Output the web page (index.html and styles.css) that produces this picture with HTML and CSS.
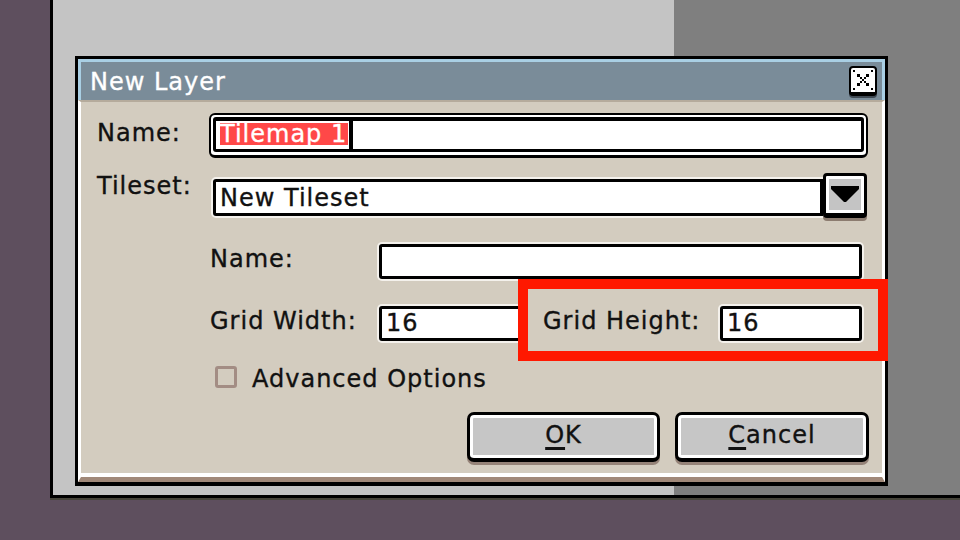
FILE: index.html
```html
<!DOCTYPE html>
<html>
<head>
<meta charset="utf-8">
<title>New Layer</title>
<link rel="stylesheet" href="styles.css">
</head>
<body>
<div class="screen">
  <div class="dialog">
    <div class="titlebar">
      <span class="title">New Layer</span>
      <div class="close">
        <svg width="20" height="20" viewBox="0 0 9 9" shape-rendering="crispEdges">
          <g fill="#000">
            <rect x="0" y="0" width="1" height="1"/><rect x="8" y="0" width="1" height="1"/>
            <rect x="0" y="8" width="1" height="1"/><rect x="8" y="8" width="1" height="1"/>
            <rect x="2" y="2" width="1" height="1"/><rect x="3" y="3" width="1" height="1"/>
            <rect x="4" y="4" width="1" height="1"/><rect x="5" y="5" width="1" height="1"/>
            <rect x="6" y="6" width="1" height="1"/><rect x="6" y="2" width="1" height="1"/>
            <rect x="5" y="3" width="1" height="1"/><rect x="3" y="5" width="1" height="1"/>
            <rect x="2" y="6" width="1" height="1"/>
          </g>
        </svg>
      </div>
    </div>
    <div class="body">
      <div class="row row-name">
        <span class="lbl lbl-name">Name:</span>
        <div class="focus-ring">
          <div class="input-focus"><span class="sel">Tilemap 1</span><span class="caret"></span></div>
        </div>
      </div>
      <div class="row row-tileset">
        <span class="lbl lbl-tileset">Tileset:</span>
        <div class="combo">
          <div class="combo-field">New Tileset</div>
          <div class="combo-btn">
            <svg width="28" height="16" viewBox="0 0 28 16"><polygon points="0,0 28,0 28,3 15,16 13,16 0,3" fill="#000"/></svg>
          </div>
        </div>
      </div>
      <div class="row row-sub">
        <span class="lbl lbl-sub">Name:</span>
        <div class="input input-wide"></div>
      </div>
      <div class="row row-sub row-grid">
        <span class="lbl lbl-sub">Grid Width:</span>
        <div class="input input-num">16</div>
        <span class="lbl lbl-height">Grid Height:</span>
        <div class="input input-num">16</div>
        <div class="highlight"></div>
      </div>
      <div class="row row-check">
        <span class="checkbox"></span>
        <span class="lbl lbl-check">Advanced Options</span>
      </div>
      <div class="row row-buttons">
        <div class="btn btn-ok"><span><u>O</u>K</span></div>
        <div class="btn btn-cancel"><span><u>C</u>ancel</span></div>
      </div>
    </div>
  </div>
</div>
</body>
</html>
```
FILE: styles.css
```css
html, body {
  margin: 0;
  padding: 0;
}
body {
  width: 960px;
  height: 540px;
  overflow: hidden;
  background: #5e4f5e;
  font-family: "DejaVu Sans", sans-serif;
  font-size: 24px;
  line-height: 28px;
  letter-spacing: 1px;
  color: #111;
  -webkit-text-stroke: 0.35px currentColor;
}
.screen {
  box-sizing: border-box;
  margin-left: 50px;
  width: 910px;
  height: 498px;
  border-left: 3px solid #000;
  border-bottom: 3px solid #000;
  background: linear-gradient(to right, #c4c4c4 621px, #7f7f7f 621px);
  box-shadow: 0 2px 0 #46443a;
  padding-top: 56px;
  padding-left: 22px;
}
.dialog {
  box-sizing: border-box;
  width: 813px;
  height: 430px;
  border: 3px solid #000;
  border-bottom-width: 4px;
  background: #d3ccbf;
}
.titlebar {
  box-sizing: border-box;
  height: 41px;
  background: #7a8c99;
  border-top: 3px solid #a9cfe4;
  border-left: 3px solid #a9cfe4;
  border-right: 3px solid #a9cfe4;
  display: flex;
  align-items: center;
  justify-content: space-between;
  padding-left: 9px;
  padding-right: 5px;
}
.title {
  color: #fff;
  padding-top: 2px;
}
.close {
  box-sizing: border-box;
  width: 28px;
  height: 30px;
  border: 2px solid #000;
  border-bottom-width: 4px;
  border-radius: 4px;
  background: #fff;
  box-shadow: 0 2px 0 #3e4852;
  display: flex;
  align-items: center;
  justify-content: center;
}
.body {
  box-sizing: border-box;
  height: 382px;
  border-top: 2px solid #b5ab9c;
  border-left: 3px solid #fff;
  border-right: 3px solid #fff;
  border-bottom: 5px solid #a08878;
  box-shadow: inset 0 -4px 0 #fff;
  padding-top: 11px;
}
.row {
  display: flex;
  align-items: flex-start;
}
.lbl {
  white-space: nowrap;
  flex: none;
}
.row-name {
  padding-left: 16px;
}
.lbl-name {
  width: 112px;
  margin-top: 6px;
}
.focus-ring {
  box-sizing: border-box;
  width: 659px;
  height: 45px;
  border: 2px solid #000;
  border-bottom-width: 3px;
  border-radius: 6px;
  padding: 2px 2px 3px;
  background: #fff;
}
.input-focus {
  box-sizing: border-box;
  height: 35px;
  border: 3px solid #000;
  border-top-width: 4px;
  border-radius: 3px;
  background: #fff;
  display: flex;
  align-items: center;
  padding-left: 4px;
}
.sel {
  background: #ff4848;
  color: #fff;
  line-height: 22px;
  height: 22px;
  padding-right: 1px;
  margin-top: -2px;
}
.caret {
  width: 4px;
  height: 28px;
  background: #000;
  margin-left: 1px;
}
.row-tileset {
  padding-left: 16px;
  margin-top: 15px;
}
.lbl-tileset {
  width: 116px;
  margin-top: -1px;
}
.combo {
  display: flex;
  align-items: flex-start;
}
.combo-field {
  box-sizing: border-box;
  width: 610px;
  height: 37px;
  margin-top: 6px;
  border: 3px solid #000;
  border-radius: 3px 0 0 3px;
  background: #fff;
  box-shadow: 0 0 0 2px #f4f1ec;
  padding-left: 4px;
  line-height: 32px;
}
.combo-btn {
  box-sizing: border-box;
  width: 44px;
  height: 45px;
  border: 3px solid #000;
  border-bottom-width: 5px;
  border-radius: 4px;
  background: #c4c4c4;
  box-shadow: inset 0 0 0 3px #fff, 0 3px 0 #8c7c70;
  display: flex;
  align-items: center;
  justify-content: center;
  padding-bottom: 2px;
  position: relative;
  z-index: 1;
}
.row-sub {
  padding-left: 129px;
  margin-top: 26px;
}
.lbl-sub {
  width: 169px;
  margin-top: 1px;
}
.input {
  box-sizing: border-box;
  height: 35px;
  border: 3px solid #000;
  border-radius: 3px;
  background: #fff;
  box-shadow: 0 0 0 2px #f4f1ec;
  padding-left: 4px;
  line-height: 29px;
  flex: none;
}
.input-wide {
  width: 483px;
}
.row-grid {
  margin-top: 27px;
  position: relative;
}
.input-num {
  width: 142px;
}
.lbl-height {
  width: 177px;
  margin-left: 22px;
  margin-top: 1px;
}
.highlight {
  position: absolute;
  left: 437px;
  top: -27px;
  width: 370px;
  height: 82px;
  box-sizing: border-box;
  border: 10px solid #ff1800;
}
.row-check {
  padding-left: 134px;
  margin-top: 25px;
  height: 22px;
}
.checkbox {
  box-sizing: border-box;
  width: 22px;
  height: 22px;
  border: 3px solid #a38d84;
  border-radius: 3px;
  flex: none;
}
.lbl-check {
  margin-left: 15px;
  margin-top: -1px;
  letter-spacing: 1px;
}
.row-buttons {
  justify-content: flex-end;
  padding-right: 13px;
  margin-top: 24px;
  gap: 15px;
}
.btn {
  box-sizing: border-box;
  height: 50px;
  border: 3px solid #000;
  border-bottom-width: 4px;
  border-radius: 7px;
  background: #c6c6c6;
  box-shadow: inset 0 0 0 3px #fff, 0 3px 0 #958378;
  display: flex;
  align-items: center;
  justify-content: center;
  padding-bottom: 4px;
}
.btn-ok {
  width: 193px;
}
.btn-cancel {
  width: 194px;
}
.btn u {
  text-decoration: underline;
  text-decoration-thickness: 3px;
  text-underline-offset: 4px;
}
```
